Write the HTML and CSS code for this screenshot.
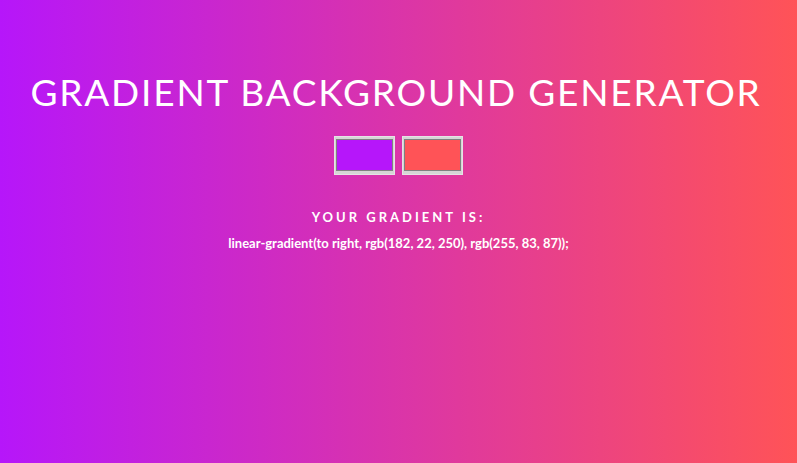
FILE: index.html
```html
<!DOCTYPE html>
<html>
<head>
<meta charset="utf-8">
<title>Gradient Background Generator</title>
<link rel="stylesheet" href="styles.css">
</head>
<body class="page">
  <h1 class="title">Gradient Background Generator</h1>
  <div class="pickers">
    <input class="picker" type="color" value="#b616fa">
    <input class="picker" type="color" value="#ff5357">
  </div>
  <h3 class="label">Your gradient is:</h3>
  <p class="code">linear-gradient(to right, rgb(182, 22, 250), rgb(255, 83, 87));</p>
</body>
</html>
```
FILE: styles.css
```css
html, body {
  margin: 0;
  height: 100%;
}
.page {
  background: linear-gradient(to right, rgb(182, 22, 250), rgb(255, 83, 87));
  color: #fff;
  font-family: Lato, "Open Sans", sans-serif;
  text-align: center;
  padding-top: 70px;
  box-sizing: border-box;
}
.title {
  margin: 0 0 0 -5px;
  font-size: 37px;
  line-height: 44px;
  font-weight: 400;
  text-transform: uppercase;
  letter-spacing: 1.8px;
}
.pickers {
  display: flex;
  justify-content: center;
  gap: 7px;
  margin-top: 22px;
}
.picker {
  width: 61px;
  height: 39px;
  margin: 0;
  padding: 2px 1px 3px;
  border: 1px solid #e4e4e4;
  background: #d6d6d6;
  box-sizing: border-box;
}
.picker::-webkit-color-swatch-wrapper {
  padding: 0;
}
.picker::-webkit-color-swatch {
  border: 1px solid #808080;
}
.label {
  margin: 34px 0 0;
  font-size: 13px;
  line-height: 16px;
  font-weight: 700;
  text-transform: uppercase;
  letter-spacing: 3px;
}
.code {
  margin: 10px 0 0;
  font-size: 13px;
  line-height: 16px;
  font-weight: 700;
}
```
